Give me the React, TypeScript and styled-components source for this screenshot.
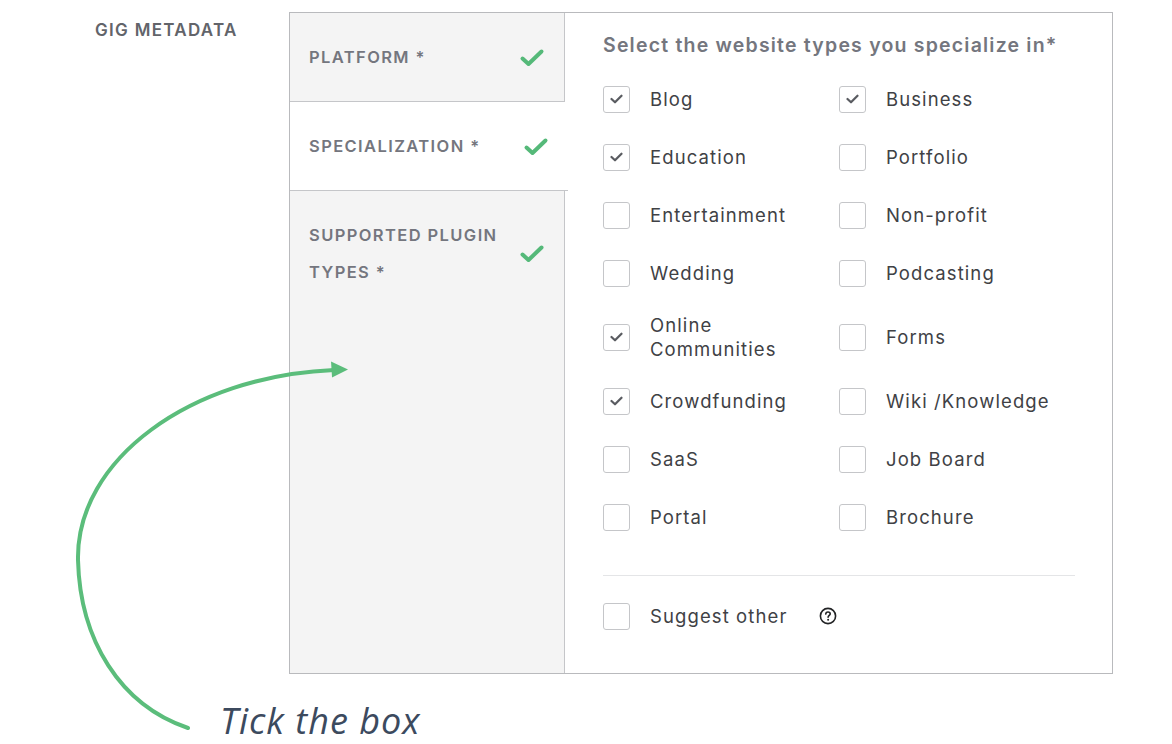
import React, { FC } from 'react'
import styled, { createGlobalStyle } from 'styled-components'

type Option = {
  label: string
  checked?: boolean
}

const leftColumn: Option[] = [
  { label: 'Blog', checked: true },
  { label: 'Education', checked: true },
  { label: 'Entertainment' },
  { label: 'Wedding' },
  { label: 'Online Communities', checked: true },
  { label: 'Crowdfunding', checked: true },
  { label: 'SaaS' },
  { label: 'Portal' },
]

const rightColumn: Option[] = [
  { label: 'Business', checked: true },
  { label: 'Portfolio' },
  { label: 'Non-profit' },
  { label: 'Podcasting' },
  { label: 'Forms' },
  { label: 'Wiki /Knowledge' },
  { label: 'Job Board' },
  { label: 'Brochure' },
]

const tabs = [
  { label: 'PLATFORM *' },
  { label: 'SPECIALIZATION *', active: true },
  { label: 'SUPPORTED PLUGIN TYPES *', last: true },
]

const GreenCheck = () => (
  <svg width='26' height='20' viewBox='0 0 26 20'>
    <path
      d='M3.5 10.5 L9.5 16 L22.5 3.5'
      fill='none'
      stroke='#55b979'
      strokeWidth='4'
      strokeLinecap='round'
      strokeLinejoin='round'
    />
  </svg>
)

const SmallTick = () => (
  <svg width='13' height='10' viewBox='0 0 13 10'>
    <path
      d='M1.5 5 L5 8.3 L11.5 1.7'
      fill='none'
      stroke='#5a5c61'
      strokeWidth='2.2'
      strokeLinecap='round'
      strokeLinejoin='round'
    />
  </svg>
)

const HelpIcon = () => (
  <svg width='18' height='18' viewBox='0 0 18 18'>
    <circle cx='9' cy='9' r='7.6' fill='none' stroke='#222325' strokeWidth='1.6' />
    <path
      d='M6.8 7.1 C6.8 5.8 7.8 5 9 5 C10.3 5 11.2 5.8 11.2 6.9 C11.2 8.3 9.1 8.5 9.1 10.2'
      fill='none'
      stroke='#222325'
      strokeWidth='1.6'
      strokeLinecap='round'
    />
    <circle cx='9.1' cy='12.7' r='1' fill='#222325' />
  </svg>
)

const CheckItem: FC<Option> = ({ label, checked }) => (
  <Item>
    <Box>{checked && <SmallTick />}</Box>
    <Label>{label}</Label>
  </Item>
)

const App: FC = () => {
  return (
    <Page>
      <GlobalStyle />
      <SectionTitle>GIG METADATA</SectionTitle>
      <Card>
        <Sidebar>
          {tabs.map((tab) => (
            <Tab key={tab.label} $active={tab.active} $last={tab.last}>
              <TabRow>
                <TabLabel>{tab.label}</TabLabel>
                <GreenCheck />
              </TabRow>
            </Tab>
          ))}
        </Sidebar>
        <Panel>
          <Heading>Select the website types you specialize in*</Heading>
          <Grid>
            {leftColumn.map((left, i) => (
              <React.Fragment key={left.label}>
                <CheckItem {...left} />
                <CheckItem {...rightColumn[i]} />
              </React.Fragment>
            ))}
          </Grid>
          <Divider />
          <Item>
            <Box />
            <Label>Suggest other</Label>
            <HelpWrap>
              <HelpIcon />
            </HelpWrap>
          </Item>
        </Panel>
      </Card>
      <Arrow width='360' height='744' viewBox='0 0 360 744'>
        <path
          d='M188 728 C120 705 80 640 78 560 C76 460 190 376 334 370'
          fill='none'
          stroke='#5bbd7b'
          strokeWidth='4'
          strokeLinecap='round'
        />
        <polygon points='331,361.5 348,369.5 332,377.5' fill='#5bbd7b' />
      </Arrow>
      <Annotation>Tick the box</Annotation>
    </Page>
  )
}

const GlobalStyle = createGlobalStyle`
  body {
    margin: 0;
    background: #fff;
    font-family: Inter, 'Noto Sans', sans-serif;
  }
`

const Page = styled.div`
  position: relative;
  width: 1172px;
  height: 744px;
  display: flex;
  align-items: flex-start;
  padding: 12px 0 0 95px;
  box-sizing: border-box;
  overflow: hidden;
`

const SectionTitle = styled.div`
  width: 194px;
  margin-top: 8px;
  font-size: 17px;
  font-weight: 600;
  color: #62646a;
  letter-spacing: 1.3px;
`

const Card = styled.div`
  display: flex;
  width: 824px;
  height: 662px;
  box-sizing: border-box;
  border: 1px solid #b9babd;
`

const Sidebar = styled.div`
  width: 275px;
  flex-shrink: 0;
  display: flex;
  flex-direction: column;
  background: #f4f4f4;
`

const Tab = styled.div<{ $active?: boolean; $last?: boolean }>`
  padding: 26px 19px 25px 19px;
  box-sizing: border-box;
  position: relative;
  z-index: ${(p) => (p.$active ? 1 : 0)};
  background: ${(p) => (p.$active ? '#fff' : '#f4f4f4')};
  border-bottom: ${(p) => (p.$last ? 'none' : '1px solid #c5c6c9')};
  border-right: ${(p) => (p.$active ? 'none' : '1px solid #c5c6c9')};
  margin-right: ${(p) => (p.$active ? '-3px' : '0')};
  flex: ${(p) => (p.$last ? '1' : '0 0 auto')};
`

const TabRow = styled.div`
  display: flex;
  align-items: center;
  justify-content: space-between;
  gap: 12px;

  svg {
    flex-shrink: 0;
  }
`

const TabLabel = styled.div`
  font-size: 16.5px;
  font-weight: 600;
  line-height: 37px;
  color: #74767e;
  letter-spacing: 1.4px;
`

const Panel = styled.div`
  flex: 1;
  padding: 19px 37px 0 38px;
  background: #fff;
`

const Heading = styled.div`
  font-size: 19.5px;
  font-weight: 600;
  line-height: 26px;
  color: #74767e;
  letter-spacing: 1.2px;
  white-space: nowrap;
`

const Grid = styled.div`
  display: grid;
  grid-template-columns: 236px 1fr;
  margin-top: 12px;
`

const Item = styled.div`
  display: flex;
  align-items: center;
  min-height: 58px;
  padding: 11px 12px 11px 0;
  box-sizing: border-box;
`

const Box = styled.div`
  width: 27px;
  height: 27px;
  box-sizing: border-box;
  border: 1px solid #c5c6c9;
  border-radius: 3px;
  display: flex;
  align-items: center;
  justify-content: center;
  flex-shrink: 0;
  margin-right: 20px;
`

const Label = styled.div`
  font-size: 18.5px;
  line-height: 24px;
  color: #404145;
  letter-spacing: 1.1px;
`

const HelpWrap = styled.span`
  display: flex;
  margin-left: 32px;
`

const Divider = styled.div`
  height: 1px;
  background: #e4e5e7;
  margin: 29px 0 11px;
`

const Arrow = styled.svg`
  position: absolute;
  left: 0;
  top: 0;
  pointer-events: none;
`

const Annotation = styled.div`
  position: absolute;
  left: 220px;
  top: 703px;
  font-family: 'Open Sans', sans-serif;
  font-style: italic;
  font-size: 36px;
  line-height: 36px;
  color: #3c4a5e;
  letter-spacing: 1px;
`

export default App
